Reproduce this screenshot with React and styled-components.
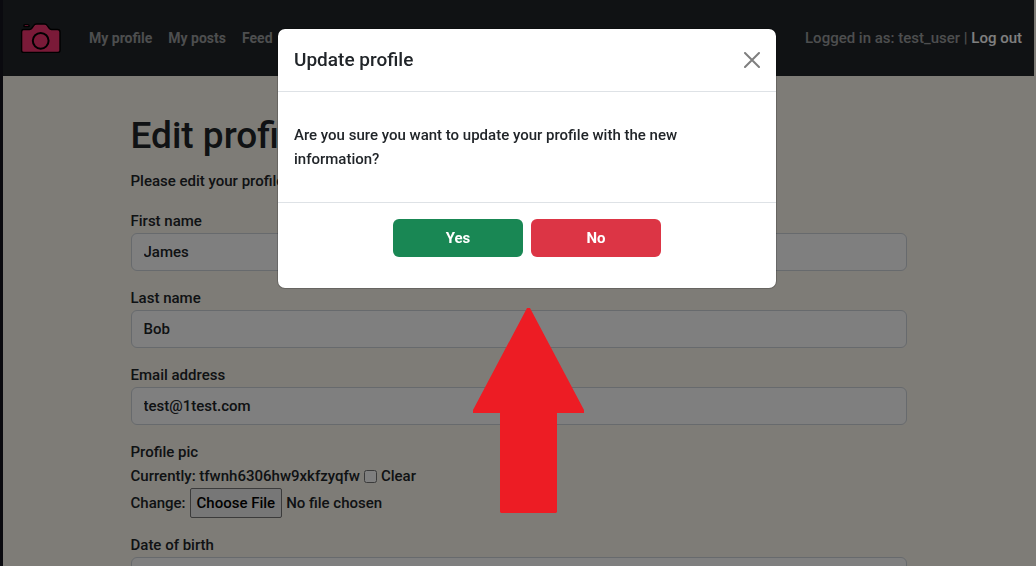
import React from "react";
import styled, { createGlobalStyle } from "styled-components";

const GlobalStyle = createGlobalStyle`
  *, *::before, *::after { box-sizing: border-box; }
  html, body { height: 100%; }
  body {
    margin: 0;
    overflow: hidden;
    background: #fcf8ee;
    color: #212529;
    font-family: Roboto, "Liberation Sans", sans-serif;
    font-size: 15px;
    font-weight: 500;
    line-height: 24px;
  }
  h1, h2, p { margin: 0; }
  button, input { font: inherit; color: inherit; }
`;

const Page = styled.div`
  min-height: 100vh;
  padding-right: 2px;
  border-left: 3px solid #14151f;
`;

const Navbar = styled.header`
  display: flex;
  align-items: center;
  justify-content: space-between;
  height: 76px;
  padding: 0 12px 0 16px;
  background: #212529;
  color: #9b9d9e;
`;

const NavGroup = styled.nav`
  display: flex;
  align-items: center;
  gap: 16px;
  font-size: 14px;
  font-weight: 700;
`;

const Brand = styled.a`
  display: flex;
  margin-right: 10px;
`;

const NavLink = styled.a`
  color: ${(p) => (p.$strong ? "#ffffff" : "inherit")};
  text-decoration: none;
`;

const Container = styled.main`
  width: 100%;
  max-width: 960px;
  margin: 0 auto;
  padding: 36px 92px 24px;
`;

const Title = styled.h1`
  margin-bottom: 9px;
  font-size: 37px;
  font-weight: 500;
  line-height: 48px;
`;

const Form = styled.form`
  display: flex;
  flex-direction: column;
  gap: 15px;
  margin-top: 16px;
`;

const Field = styled.div`
  display: flex;
  flex-direction: column;
`;

const TextInput = styled.input`
  width: 100%;
  height: 38px;
  padding: 6px 12px;
  border: 1px solid #ced4da;
  border-radius: 6px;
  background: #ffffff;
`;

const InlineRow = styled.div`
  display: flex;
  align-items: center;
  gap: 4px;
`;

const Checkbox = styled.input`
  width: 13px;
  height: 13px;
  margin: 0;
`;

const FileInput = styled.input`
  height: 30px;

  &::file-selector-button {
    height: 30px;
    margin: 0 4px 0 0;
    padding: 0 6px;
    border: 1px solid #767676;
    border-radius: 2px;
    background: #efefef;
    color: #000000;
    font: inherit;
  }
`;

const Backdrop = styled.div`
  position: fixed;
  inset: 0;
  display: flex;
  flex-direction: column;
  align-items: center;
  gap: 19px;
  padding: 28px 0 0 18px;
  background: rgba(0, 0, 0, 0.5);
`;

const Modal = styled.section`
  width: 100%;
  max-width: 500px;
  border: 1px solid rgba(0, 0, 0, 0.18);
  border-radius: 8px;
  background: #ffffff;
  background-clip: padding-box;
`;

const ModalHeader = styled.div`
  display: flex;
  align-items: center;
  justify-content: space-between;
  padding: 16px;
  border-bottom: 1px solid #dee2e6;
`;

const ModalTitle = styled.h2`
  font-size: 19px;
  font-weight: 500;
  line-height: 30px;
`;

const CloseButton = styled.button`
  display: flex;
  padding: 0;
  border: 0;
  background: none;
  color: #7f7f7f;
`;

const ModalBody = styled.p`
  padding: 31px 16px;
`;

const ModalFooter = styled.div`
  display: flex;
  justify-content: center;
  gap: 8px;
  padding: 16px 16px 31px;
  border-top: 1px solid #dee2e6;
`;

const ActionButton = styled.button`
  width: 130px;
  height: 38px;
  border: 0;
  border-radius: 6px;
  background: ${(p) => (p.$danger ? "#dc3545" : "#198754")};
  color: #ffffff;
  font-weight: 700;
`;

function CameraIcon() {
  return (
    <svg width="44" height="34" viewBox="0 0 44 34" fill="#f43470" stroke="#000" strokeWidth="1.4" strokeLinejoin="round">
      <path d="M5 5.600V4.600Q5 3.600 6 3.600H9Q10 3.600 10 4.600V5.600Z" />
      <path d="M4.500 8.500H10.500Q12 8.500 13 7L14.700 4.600Q15.700 3 17.500 3H25.500Q27.300 3 28.300 4.600L30 7Q31 8.500 32.500 8.500H38.500Q41 8.500 41 11V29.500Q41 31.400 38.500 31.400H4.800Q2.600 31.400 2.600 29.500V11Q2.600 8.500 4.500 8.500Z" />
      <circle cx="21.700" cy="19.800" r="7.900" strokeWidth="2" />
    </svg>
  );
}

function TextField({ id, label, value, type = "text" }) {
  return (
    <Field>
      <label htmlFor={id}>{label}</label>
      <TextInput id={id} type={type} defaultValue={value} />
    </Field>
  );
}

export default function App() {
  return (
    <>
      <GlobalStyle />
      <Page>
        <Navbar>
          <NavGroup>
            <Brand href="#home" aria-label="Home"><CameraIcon /></Brand>
            <NavLink href="#profile">My profile</NavLink>
            <NavLink href="#posts">My posts</NavLink>
            <NavLink href="#feed">Feed</NavLink>
          </NavGroup>
          <span>Logged in as: test_user | <NavLink $strong href="#logout">Log out</NavLink></span>
        </Navbar>
        <Container>
          <Title>Edit profile</Title>
          <p>Please edit your profile below.</p>
          <Form>
            <TextField id="first" label="First name" value="James" />
            <TextField id="last" label="Last name" value="Bob" />
            <TextField id="email" label="Email address" value="test@1test.com" />
            <Field>
              <label htmlFor="picture">Profile pic</label>
              <InlineRow>
                <span>Currently: tfwnh6306hw9xkfzyqfw</span>
                <Checkbox id="clear" type="checkbox" />
                <label htmlFor="clear">Clear</label>
              </InlineRow>
              <InlineRow>
                <span>Change:</span>
                <FileInput id="picture" type="file" />
              </InlineRow>
            </Field>
            <TextField id="birth" label="Date of birth" />
          </Form>
        </Container>
      </Page>
      <Backdrop>
        <Modal role="dialog" aria-modal="true" aria-labelledby="modal-title">
          <ModalHeader>
            <ModalTitle id="modal-title">Update profile</ModalTitle>
            <CloseButton type="button" aria-label="Close">
              <svg width="16" height="16" viewBox="0 0 16 16" stroke="currentColor" strokeWidth="2" strokeLinecap="round">
                <path d="M1 1 15 15M15 1 1 15" />
              </svg>
            </CloseButton>
          </ModalHeader>
          <ModalBody>Are you sure you want to update your profile with the new information?</ModalBody>
          <ModalFooter>
            <ActionButton type="button">Yes</ActionButton>
            <ActionButton type="button" $danger>No</ActionButton>
          </ModalFooter>
        </Modal>
        <svg width="114" height="205" viewBox="0 0 114 205" fill="#ed1c24" aria-hidden="true">
          <path d="M57 0H60L114 102V105H87V204L86 205H31L30 204V105H3V102Z" />
        </svg>
      </Backdrop>
    </>
  );
}
